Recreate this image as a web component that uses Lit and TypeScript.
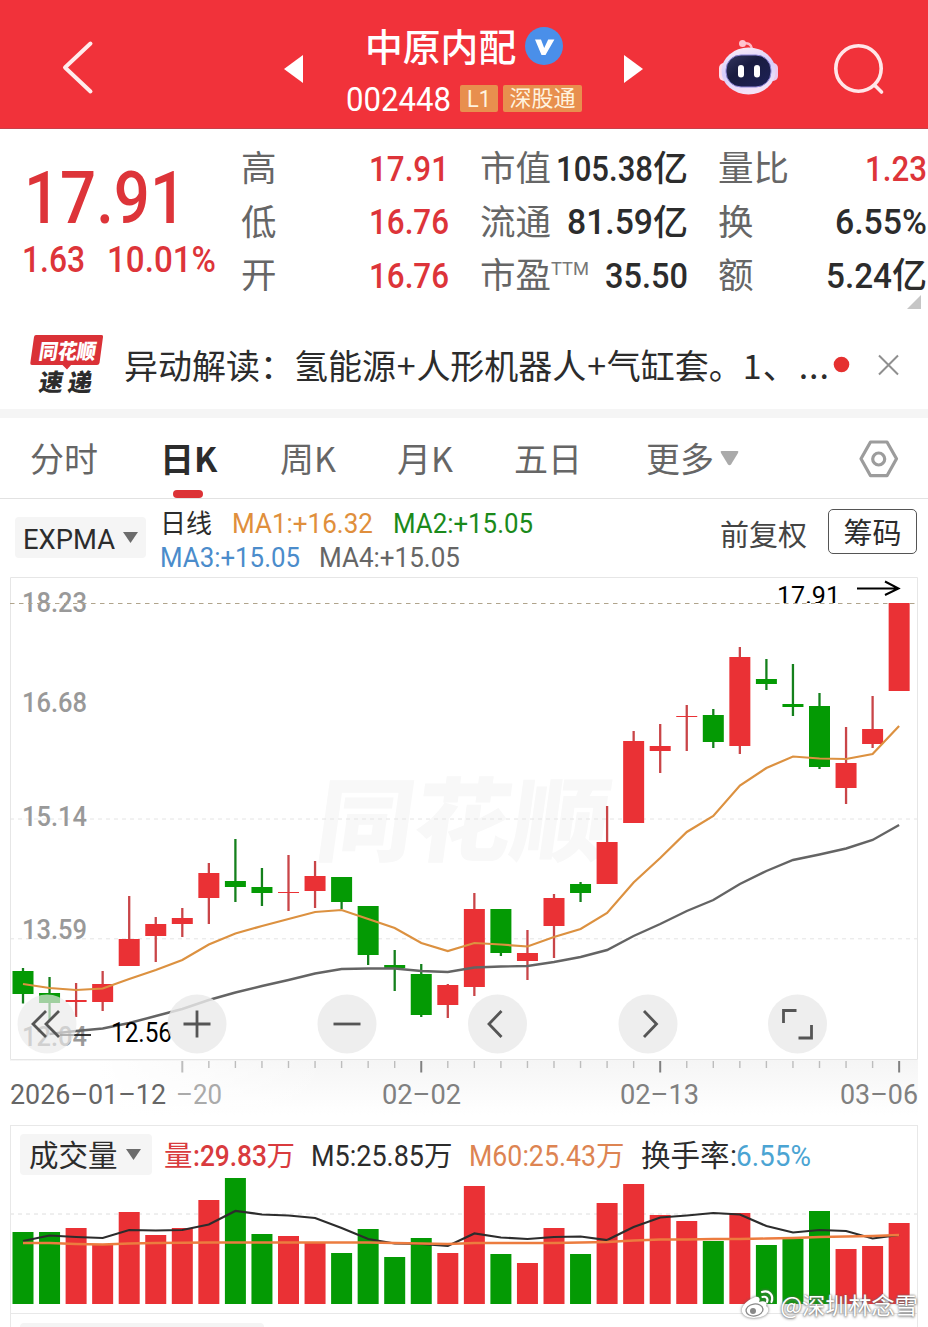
import { LitElement, html, svg, css } from "lit";
import { customElement } from "lit/decorators.js";

const FONT = css`Roboto, "Noto Sans CJK SC", sans-serif`;

/** Latin text squeezed to a fixed advance width, sitting on its own baseline. */
const fit = (text: string, width: number, size: number, cls = "") => html`
  <svg class="fit ${cls}" width=${width} height=${size * 0.72}>
    <text x="0" y=${size * 0.72} font-size=${size} textLength=${width} lengthAdjust="spacingAndGlyphs">${text}</text>
  </svg>`;

const shared = css`
  :host { display: block; font-family: ${FONT}; color: #2c2c2c; }
  * { box-sizing: border-box; }
  svg { display: block; overflow: visible; flex: none; }
  .fit { fill: currentColor; }
  .fit.m { font-weight: 500; }
  .cjk { font-family: "Noto Sans CJK SC", sans-serif; line-height: 1; white-space: nowrap; }
  .row { display: flex; align-items: baseline; }
`;

@customElement("stock-header")
class StockHeader extends LitElement {
  static styles = [shared, css`
    .bar { height: 129px; background: #f1323a; border-bottom: 1px solid #c9404a; display: grid;
      grid-template-columns: 284px 19px 321px 19px 76px 60px 1fr; color: #fff; }
    .bar > svg { height: 129px; width: 100%; }
    .mid { padding: 26px 0 0 44px; }
    .title { display: flex; align-items: center; gap: 9px; height: 39px; margin-left: 18px; }
    .name { font-size: 37.8px; font-weight: 500; margin-top: -2px; }
    .code { display: flex; margin-top: 20px; height: 27px; gap: 5px; }
    .num { margin: 2px 4px 0 -1px; }
    .tag { height: 27px; background: #e88f4e; color: #fff3df; border-radius: 2px; display: flex; align-items: center; justify-content: center; }
    .l1 { width: 38px; }
    .sgt { width: 79px; font-size: 22px; }
    .sgt .cjk { margin-top: -5px; }
  `];
  render() {
    return html`<div class="bar">
      <svg viewBox="0 0 284 129"><path d="M90.500 43.500 65 67.500 90.500 91.500" fill="none" stroke="#ffecec" stroke-width="4" stroke-linecap="round" stroke-linejoin="round"/></svg>
      <svg viewBox="0 0 19 129"><path d="M0 69 19 55V83Z" fill="#fff"/></svg>
      <div class="mid">
        <div class="title"><span class="cjk name">中原内配</span>
          <svg width="38" height="38" viewBox="0 0 38 38"><circle cx="19" cy="19" r="19" fill="#4a8fe9"/><path d="M10 12.500h6l3.200 8.500 4-8.500h6.200L20.500 28h-4Z" fill="#fff"/></svg>
        </div>
        <div class="code"><div class="num">${fit("002448", 105, 33.5)}</div>
          <span class="tag l1">${fit("L1", 24, 23)}</span>
          <span class="tag sgt"><span class="cjk">深股通</span></span></div>
      </div>
      <svg viewBox="0 0 19 129"><path d="M0 55 19 69 0 83Z" fill="#fff"/></svg>
      <span></span>
      <svg viewBox="0 0 60 129">
        <defs><linearGradient id="shell" x1="0" y1="0" x2="0.300" y2="1"><stop offset="0" stop-color="#fff0f6"/><stop offset=".55" stop-color="#d6cdfb"/><stop offset="1" stop-color="#f3e2f7"/></linearGradient>
        <linearGradient id="face" x1="0" y1="0" x2="1" y2="1"><stop offset="0" stop-color="#34375f"/><stop offset=".4" stop-color="#191c40"/><stop offset="1" stop-color="#1d2158"/></linearGradient></defs>
        <path d="M24 43.500Q32 42 33 49" fill="none" stroke="#ffb9c6" stroke-width="2.500"/><circle cx="23.500" cy="43.500" r="3.500" fill="#ffc4d0"/>
        <rect x="0" y="63" width="10" height="18" rx="5" fill="#ffdbe8"/><rect x="49" y="63" width="10" height="18" rx="5" fill="#ecc8ee"/>
        <ellipse cx="29.500" cy="71" rx="27" ry="23.500" fill="url(#shell)"/>
        <rect x="7" y="55" width="45" height="32" rx="15" fill="url(#face)" stroke="#8f86d8" stroke-width="1"/>
        <rect x="19" y="65" width="6" height="12.500" rx="3" fill="#fff"/><rect x="35" y="65" width="6" height="12.500" rx="3" fill="#fff"/>
      </svg>
      <svg viewBox="0 0 149 129"><g fill="none" stroke="#ffe6e8" stroke-width="3.600" stroke-linecap="round"><circle cx="79.500" cy="68.500" r="22.700"/><path d="m96.500 86 6 6"/></g></svg>
    </div>`;
  }
}

type Cell = [string, string, number, string, string];

@customElement("stock-quote")
class StockQuote extends LitElement {
  static styles = [shared, css`
    .quote { height: 194px; display: grid; grid-template-columns: 241px 208px 208px 210px; padding-top: 19px; }
    .c2 { margin-left: 31px; width: 208px; } .c3 { margin-left: 61px; width: 209px; }
    .red { color: #dd3439; }
    .lead { padding: 22px 0 0 23px; }
    .price { margin-left: 1px; }
    .delta { display: flex; gap: 22px; margin-top: 23px; margin-left: -1px; }
    .line { display: flex; align-items: baseline; justify-content: space-between; height: 53.5px; }
    .label { font-size: 35.5px; color: #666; display: flex; align-items: baseline; }
    .val { display: flex; align-items: baseline; font-size: 35px; }
    .val .cjk { font-weight: 500; }
    .ttm { position: relative; top: -13px; color: #777; }
    .fold { display: flex; justify-content: flex-end; padding-right: 6px; margin-top: -14px; }
  `];
  cols: Cell[][] = [
    [["高", "17.91", 80, "", "red"], ["低", "16.76", 80, "", "red"], ["开", "16.76", 80, "", "red"]],
    [["市值", "105.38", 97, "亿", ""], ["流通", "81.59", 86, "亿", ""], ["市盈", "35.50", 83, "", ""]],
    [["量比", "1.23", 62, "", "red"], ["换", "6.55%", 92, "", ""], ["额", "5.24", 66, "亿", ""]],
  ];
  render() {
    return html`<div class="quote">
      <div class="lead red"><div class="price">${fit("17.91", 162, 73, "m")}</div>
        <div class="delta">${fit("1.63", 63, 36, "m")}${fit("10.01%", 109, 36, "m")}</div></div>
      ${this.cols.map((rows, i) => html`<div class="c${i + 1}">
        ${rows.map(([l, v, w, u, c]) => html`<div class="line">
          <span class="label"><span class="cjk">${l}</span>${l === "市盈" ? html`<span class="ttm">${fit("TTM", 38, 19)}</span>` : ""}</span>
          <span class="val ${c}">${fit(v, w, 35, "m")}${u ? html`<span class="cjk">${u}</span>` : ""}</span>
        </div>`)}
        ${i === 2 ? html`<div class="fold"><svg width="14" height="14"><path d="M14 0V14H0Z" fill="#c6c6c6"/></svg></div>` : ""}
      </div>`)}
    </div>`;
  }
}

@customElement("stock-news")
class StockNews extends LitElement {
  static styles = [shared, css`
    .news { height: 95px; border-bottom: 9px solid #f5f5f5; display: flex; align-items: center; padding-left: 30px; }
    .logo { width: 94px; margin-top: -4px; }
    .logo text { font-family: "Noto Sans CJK SC", sans-serif; font-weight: 900; }
    .text { font-size: 34px; width: 706px; display: flex; align-items: baseline; margin-top: -3px; }
    .plus { width: 20.5px; display: inline-block; text-align: center; }
    .one { margin: 0 1px 0 0; }
    .dots { margin-left: 2px; letter-spacing: 1px; }
    .ctl { margin-top: -2px; }
  `];
  render() {
    return html`<div class="news">
      <svg class="logo" width="94" height="70" viewBox="30 329 94 70">
        <path d="M36 335H101.500Q103.500 335 103 337L99.500 363Q99 365 97 365H71L67 369.500 62.500 365H32Q30 365 30.300 363L34 337Q34.300 335 36 335Z" fill="#da3137"/>
        <text transform="translate(38 358.500) skewX(-9)" font-size="21" textLength="57" lengthAdjust="spacingAndGlyphs" fill="#fff">同花顺</text>
        <text transform="translate(38 391) skewX(-9)" font-size="24" textLength="53" fill="#2c2c2c">速递</text>
      </svg>
      <div class="text cjk"><span>异动解读：氢能源</span><span class="plus">+</span><span>人形机器人</span><span class="plus">+</span><span>气缸套。</span><span class="one">1</span><span>、</span><span class="dots">...</span></div>
      <svg class="ctl" width="98" height="24" viewBox="830 353 98 24"><circle cx="841.500" cy="364.500" r="7.800" fill="#e5302f"/><path d="m879 355.500 19 19m0-19-19 19" stroke="#8f8f8f" stroke-width="2"/></svg>
    </div>`;
  }
}

@customElement("chart-tabs")
class ChartTabs extends LitElement {
  static styles = [shared, css`
    .tabs { height: 81px; border-bottom: 1px solid #e2e2e2; display: grid; grid-template-columns: 132px 118px 117px 117px 132px 213px 1fr; padding-left: 30px; color: #666; font-size: 34px; }
    .tab { display: flex; flex-direction: column; padding-top: 23px; align-items: flex-start; }
    .on { color: #2c2c2c; font-weight: 700; }
    .on span { margin-left: -2px; }
    .mark { width: 30px; height: 8px; border-radius: 4px; background: #dc3236; margin: 15px 0 0 11px; }
    .more { flex-direction: row; gap: 6px; justify-content: flex-start; }
    .more svg { margin-top: 10px; }
    .gear { margin-top: 22px; }
  `];
  render() {
    return html`<div class="tabs">
      <span class="tab cjk">分时</span>
      <span class="tab cjk on"><span>日K</span><i class="mark"></i></span>
      <span class="tab cjk">周K</span><span class="tab cjk">月K</span><span class="tab cjk">五日</span>
      <span class="tab cjk more">更多<svg width="19" height="15"><path d="M1.500 0H17.500Q19 0 18 2L11 13.500Q9.500 15 8 13.500L1 2Q0 0 1.500 0Z" fill="#aaa"/></svg></span>
      <svg class="gear" width="40" height="38" viewBox="0 0 40 38" fill="none" stroke="#9c9c9c" stroke-width="3.200" stroke-linejoin="round"><path d="M11.500 2H28L37.500 18.700 28 35.700H11.500L2 18.700Z"/><circle cx="19.700" cy="19" r="6"/></svg>
    </div>`;
  }
}

@customElement("chart-legend")
class ChartLegend extends LitElement {
  static styles = [shared, css`
    .legend { height: 73px; display: flex; }
    .pick { margin: 18px 0 0 15px; width: 131px; height: 41px; background: #f5f5f5; border-radius: 4px; display: flex; align-items: center; gap: 8px; padding-left: 8px; }
    .pick .fit { margin-top: 3px; }
    .lines { margin: 10px 0 0 14px; width: 560px; }
    .first { height: 38px; }
    .second { height: 20px; }
    .day { font-size: 26px; margin-right: 20px; }
    .o { color: #e08f3c; margin-right: 20px; } .g { color: #1b8a1b; } .b { color: #4b8ccb; margin-right: 19px; } .k { color: #666; }
    .adj { font-size: 29px; margin-top: 20px; color: #444; width: 108px; }
    .chip { margin-top: 10px; width: 89px; height: 45px; border: 1.500px solid #555; border-radius: 5px; font-size: 29px; display: flex; align-items: center; justify-content: center; }
    .chip span { margin-top: -1px; }
  `];
  render() {
    return html`<div class="legend">
      <div class="pick">${fit("EXPMA", 92, 28)}<svg width="15" height="11"><path d="M0 0H15L7.500 11Z" fill="#6c6c6c"/></svg></div>
      <div class="lines">
        <div class="row first"><span class="cjk day">日线</span><span class="o">${fit("MA1:+16.32", 141, 28)}</span><span class="g">${fit("MA2:+15.05", 140, 28)}</span></div>
        <div class="row second"><span class="b">${fit("MA3:+15.05", 140, 28)}</span><span class="k">${fit("MA4:+15.05", 141, 28)}</span></div>
      </div>
      <span class="cjk adj">前复权</span>
      <div class="chip"><span class="cjk">筹码</span></div>
    </div>`;
  }
}

const RED = "#ea3135";
const GREEN = "#049a04";
const cx = (i: number) => 23 + i * 26.55;
const path = (ys: number[], from = 0) => ys.map((y, i) => `${i ? "L" : "M"}${cx(i + from).toFixed(1)} ${y}`).join("");

/* rising flag, body top, body bottom, wick top, wick bottom */
const CANDLES: [number, number, number, number, number][] = [
  [0, 971, 994, 968, 1003.5], [0, 993, 1003, 977, 1020], [1, 1000, 1002, 983, 1017], [1, 984, 1002, 971, 1011],
  [1, 939, 966, 896, 966], [1, 924, 936, 917, 962], [1, 918, 924, 908, 937], [1, 873, 898, 863, 924],
  [0, 881, 887, 839, 902], [0, 887, 893, 868, 906], [1, 892, 893, 855, 911], [1, 876, 891, 861, 908],
  [0, 877, 902, 877, 909], [0, 906, 955, 906, 965], [0, 965, 968, 950, 991], [0, 974, 1015, 964, 1017],
  [1, 985, 1005, 984, 1018], [1, 909, 987, 893, 996], [0, 909, 953, 909, 956], [1, 953, 961, 930, 980],
  [1, 898, 926, 894, 958], [0, 884, 893, 882, 902], [1, 842, 884, 806, 884], [1, 741, 823, 731, 823],
  [1, 746, 751, 724, 773], [1, 716, 717, 705, 751], [0, 715, 742, 709, 748], [1, 657, 746, 647, 754],
  [0, 679, 684, 659, 690], [0, 704, 707, 664, 716], [0, 706, 767, 693, 769], [1, 763, 788, 727, 804],
  [1, 729, 744, 696, 748], [1, 603, 691, 603, 691],
];
const FAST = [984, 988, 990, 988.5, 979, 970, 960, 944.5, 933.5, 926, 919, 912, 910, 919, 928, 943, 951, 943, 944.5, 946.5, 937, 929, 913, 882.5, 858, 832, 816, 785.5, 768, 756.5, 758.5, 759, 754, 726];
const SLOW = [1034, 1031, 1028.5, 1023, 1016, 1009, 1000, 992.5, 986, 980, 973.5, 969, 968.5, 968.5, 971, 972, 967.5, 966.5, 966, 962, 957, 950, 936, 924, 911, 900, 884, 871, 860, 854.5, 848.5, 840, 825];
const VOLUME = [1232, 1232, 1228, 1244, 1212, 1235, 1228, 1200, 1178, 1234, 1236, 1243, 1253, 1229, 1257, 1238, 1253, 1186, 1254, 1263, 1228, 1254, 1203, 1184, 1215, 1221, 1241, 1213, 1245, 1239, 1211, 1249, 1246, 1223];
const M5 = [1241, 1235.5, 1237, 1238, 1230, 1230.5, 1230, 1224.5, 1211, 1214.5, 1215.5, 1218, 1228, 1239, 1243.5, 1244, 1246, 1233.5, 1237.5, 1239, 1237, 1236.5, 1240, 1227, 1217.5, 1215.5, 1213, 1214.5, 1226, 1232.5, 1230, 1231, 1238.5, 1235];
const M60 = [1243, 1243, 1244, 1244.5, 1243.5, 1243, 1242.7, 1242.5, 1242.5, 1242.5, 1242.5, 1242.5, 1242.5, 1242.5, 1243, 1243.5, 1244, 1243, 1243, 1243, 1243, 1242.5, 1242, 1240.5, 1239.5, 1239.5, 1239, 1239, 1238.5, 1238, 1237, 1236.5, 1236, 1235];

@customElement("candle-chart")
class CandleChart extends LitElement {
  static styles = [shared, css`
    .brand { font-family: "Noto Sans CJK SC", sans-serif; font-weight: 900; fill: #f8f8f8; }
    .scale { font-weight: 500; }
  `];
  txt(s: string, x: number, y: number, w: number, size: number, fill: string, cls = "") {
    return svg`<text class=${cls} x=${x} y=${y} font-size=${size} textLength=${w} lengthAdjust="spacingAndGlyphs" fill=${fill}>${s}</text>`;
  }
  render() {
    const scale: [string, number][] = [["18.23", 612], ["16.68", 712], ["15.14", 826], ["13.59", 939], ["12.04", 1046]];
    const icons: [number, string][] = [
      [47, "M-1-13-14 0-1 13M12-13-1 0 12 13"], [197, "M-13.500 0H13.500M0-13.500V13.500"], [347, "M-13.500 0H13.500"],
      [497.5, "M4-13-8.500 0 4 13"], [648, "M-4-13 8.500 0-4 13"], [797.5, "M-14-1V-13.500H-1M14 1V14H1"],
    ];
    return html`<svg width="928" height="553" viewBox="0 572 928 553">
      <defs><linearGradient id="fade" x1="0" y1="0" x2="0" y2="1"><stop offset="0" stop-color="#f5f5f5"/><stop offset="1" stop-color="#fff"/></linearGradient>
      <linearGradient id="veil"><stop offset="0" stop-color="#fff"/><stop offset=".3" stop-color="#fff"/><stop offset="1" stop-color="#fff" stop-opacity="0"/></linearGradient></defs>
      <rect x="10" y="1060" width="908" height="55" fill="url(#fade)"/><rect x="0" y="1061" width="330" height="55" fill="url(#veil)"/>
      <text class="brand" transform="translate(313 854) skewX(-8)" font-size="91" textLength="292" lengthAdjust="spacingAndGlyphs">同花顺</text>
      <path d="M10.500 577.500H917.500V1059.500H10.500Z" fill="none" stroke="#e6e6e6"/>
      <path d="M10 819H917M10 938.800H917" stroke="#e4e4e4" stroke-dasharray="4 4"/>
      ${scale.map(([s, y]) => this.txt(s, 22, y, 65, 28.5, "#999", "scale"))}
      <path d="M10 603.500H917" stroke="#b0a48c" stroke-dasharray="4.500 4.500"/>
      <clipPath id="cap"><rect x="770" y="578" width="80" height="25"/></clipPath>
      <g clip-path="url(#cap)">${this.txt("17.91", 777, 603.8, 63, 26.5, "#000")}</g>
      <path d="M857 588.500H898M885 581.500 898.500 588.500 885 595" fill="none" stroke="#000" stroke-width="2"/>
      ${CANDLES.map(([up, a, b, h, l], i) => svg`<path d="M${cx(i)} ${h}V${l}" stroke=${up ? "#c94548" : "#14801c"} stroke-width="2.300"/><rect x=${cx(i) - 10.5} y=${a} width="21" height=${b - a} fill=${up ? RED : GREEN}/>`)}
      <path d=${path(SLOW, 1)} fill="none" stroke="#646464" stroke-width="2.400"/>
      <path d=${path(FAST)} fill="none" stroke="#dc9140" stroke-width="2.200"/>
      <path d="M60 1035H91" stroke="#222" stroke-width="1.800"/>
      ${this.txt("12.56", 111, 1041.5, 61, 27, "#000")}
      ${icons.map(([x, d]) => svg`<circle cx=${x} cy="1024" r="29.500" fill="#eaeaea" fill-opacity=${x < 60 ? 0.68 : 0.82}/><path transform="translate(${x} 1024)" d=${d} fill="none" stroke="#555" stroke-width="2.800"/>`)}
      ${CANDLES.map((_, i) => (i < 6 ? "" : svg`<path d="M${cx(i)} 1061V${(i - 6) % 9 ? 1068 : 1072.5}" stroke=${(i - 6) % 9 || i === 6 ? "#bdbdbd" : "#808080"} stroke-width=${(i - 6) % 9 ? 1.4 : 2}/>`))}
      ${this.txt("2026–01–12", 10, 1103.5, 156, 28, "#666")}
      ${this.txt("–20", 176, 1103.5, 46, 28, "#aaa")}
      ${this.txt("02–02", 382, 1103.5, 79, 28, "#808080")}${this.txt("02–13", 620, 1103.5, 79, 28, "#808080")}${this.txt("03–06", 840, 1103.5, 78, 28, "#808080")}
    </svg>`;
  }
}

@customElement("volume-chart")
class VolumeChart extends LitElement {
  static styles = [shared, css`
    .panel { margin: 0 10px; height: 202px; border: 1px solid #e8e8e8; border-bottom: 0; overflow: hidden; }
    .head { height: 48px; display: flex; align-items: flex-start; font-size: 29.5px; }
    .pick { margin: 8px 12px 0 9px; width: 132px; height: 41px; border-radius: 4px; background: #f5f5f5; display: flex; align-items: center; gap: 8px; padding-left: 9px; }
    .pick .cjk { margin-top: -1px; }
    .row { margin-top: 13px; color: #2c2c2c; }
    .r { color: #d93b3e; width: 147px; } .k { width: 158px; } .o { color: #dd8452; width: 172px; } .t { width: 95px; } .b { color: #4ba4d3; }
    .row > span { display: flex; align-items: baseline; }
    .w { font-size: 28.500px; }
    .plot { margin-left: -11px; }
    .next { width: 244px; height: 10px; margin: 9px 0 0 9px; border-radius: 4px; background: #f4f4f4; }
  `];
  render() {
    return html`<div class="panel">
      <div class="head">
        <div class="pick"><span class="cjk">成交量</span><svg width="15" height="11"><path d="M0 0H15L7.500 11Z" fill="#6c6c6c"/></svg></div>
        <div class="row">
          <span class="r"><span class="cjk w">量</span>${fit(":29.83", 74, 30, "m")}<span class="cjk w">万</span></span>
          <span class="k">${fit("M5:25.85", 113, 30)}<span class="cjk w">万</span></span>
          <span class="o">${fit("M60:25.43", 127, 30)}<span class="cjk w">万</span></span>
          <span class="t"><span class="cjk">换手率</span>${fit(":", 7, 30)}</span>
          <span class="b">${fit("6.55%", 75, 30)}</span>
        </div>
      </div>
      <svg class="plot" width="928" height="140" viewBox="0 1174 928 140">
        <path d="M10 1214H917" stroke="#dedede" stroke-dasharray="4 4"/>
        ${VOLUME.map((y, i) => svg`<rect x=${cx(i) - 10.5} y=${y} width="21" height=${1304 - y} fill=${CANDLES[i][0] ? RED : GREEN}/>`)}
        <path d=${path(M5)} fill="none" stroke="#2c2c2c" stroke-width="2.200"/>
        <path d=${path(M60)} fill="none" stroke="#ec7c3f" stroke-width="2.400"/>
        <path d="M10 1313.500H917" stroke="#e8e8e8"/>
      </svg>
      <div class="next"></div>
    </div>`;
  }
}

@customElement("weibo-mark")
class WeiboMark extends LitElement {
  static styles = [shared, css`
    :host { position: absolute; right: 10px; bottom: 7px; color: #fff; }
    .mark { display: flex; align-items: center; gap: 6px; }
    svg { filter: drop-shadow(0 0 1.500px #666); }
    .user { font-size: 23.2px; text-shadow: 0 0 2px #555, 0 1px 3px #888; }
  `];
  render() {
    return html`<div class="mark">
      <svg width="33" height="30" viewBox="0 0 33 30"><path d="M12 8C17 5 20 8 18 12 24 10 27 13 25 16 29 18 28 24 21 26.500 13 29.500 2 28 .8 21 .3 16 6 10.500 12 8Z" fill="#fff"/><ellipse cx="13.500" cy="20" rx="8.500" ry="6" fill="none" stroke="#888" stroke-width="1.300" transform="rotate(-8 13.500 20)"/><circle cx="12" cy="21" r="3" fill="#888"/><path d="M21 2C28-.5 33 5 30.500 12M21.500 7C25 6 27.500 8.500 26 12" fill="none" stroke="#fff" stroke-width="2.200" stroke-linecap="round"/></svg>
      <span class="cjk user">@深圳林念雪</span>
    </div>`;
  }
}

@customElement("app-root")
class AppRoot extends LitElement {
  static styles = css`
    :host { display: block; position: relative; width: 928px; height: 1327px; overflow: hidden; background: #fff; }
  `;
  render() {
    return html`<stock-header></stock-header><stock-quote></stock-quote><stock-news></stock-news>
      <chart-tabs></chart-tabs><chart-legend></chart-legend><candle-chart></candle-chart>
      <volume-chart></volume-chart><weibo-mark></weibo-mark>`;
  }
}
